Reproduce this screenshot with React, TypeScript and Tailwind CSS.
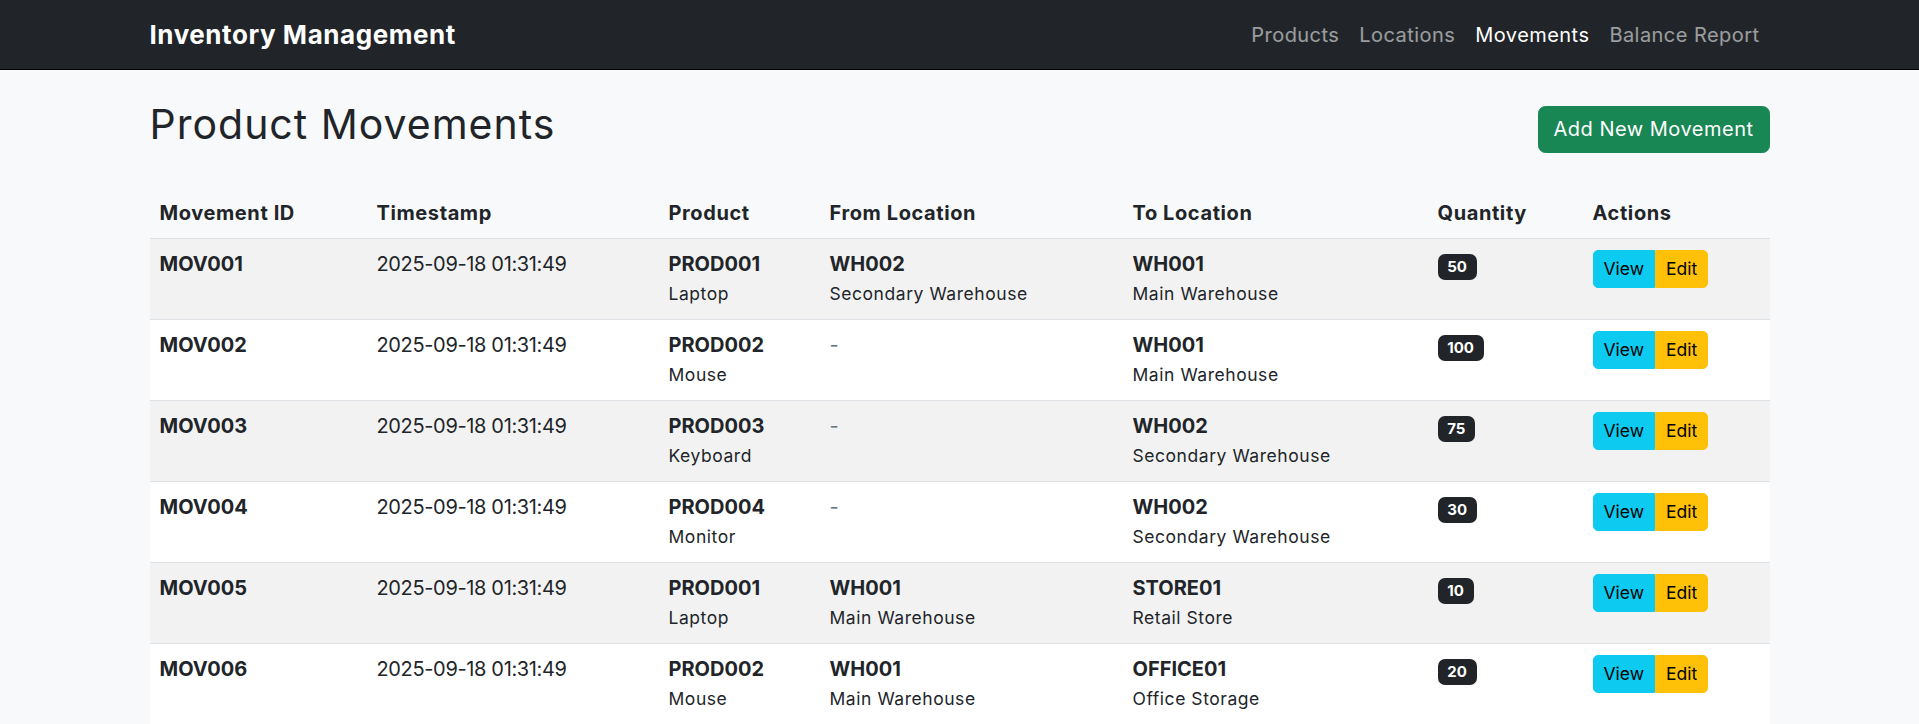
const font = { fontFamily: 'Inter, "Noto Sans", sans-serif' };

type Movement = {
  id: string;
  product: [string, string];
  from: [string, string] | null;
  to: [string, string];
  qty: number;
};

const movements: Movement[] = [
  { id: 'MOV001', product: ['PROD001', 'Laptop'], from: ['WH002', 'Secondary Warehouse'], to: ['WH001', 'Main Warehouse'], qty: 50 },
  { id: 'MOV002', product: ['PROD002', 'Mouse'], from: null, to: ['WH001', 'Main Warehouse'], qty: 100 },
  { id: 'MOV003', product: ['PROD003', 'Keyboard'], from: null, to: ['WH002', 'Secondary Warehouse'], qty: 75 },
  { id: 'MOV004', product: ['PROD004', 'Monitor'], from: null, to: ['WH002', 'Secondary Warehouse'], qty: 30 },
  { id: 'MOV005', product: ['PROD001', 'Laptop'], from: ['WH001', 'Main Warehouse'], to: ['STORE01', 'Retail Store'], qty: 10 },
  { id: 'MOV006', product: ['PROD002', 'Mouse'], from: ['WH001', 'Main Warehouse'], to: ['OFFICE01', 'Office Storage'], qty: 20 },
];

function CodeCell({ value }: { value: [string, string] | null }) {
  if (!value) {
    return <span className="text-[#6c757d]">-</span>;
  }
  return (
    <>
      <div className="font-bold">{value[0]}</div>
      <div className="text-[17.5px] leading-[30px] tracking-[0.55px] text-[#212529]">{value[1]}</div>
    </>
  );
}

export default function App() {
  const links = ['Products', 'Locations', 'Movements', 'Balance Report'];

  return (
    <div className="min-h-screen bg-[#f8f9fa] text-[#212529]" style={font}>
      {/* Navbar */}
      <nav className="h-[70px] bg-[#212529] border-b border-black">
        <div className="w-[1620px] mx-auto h-full flex items-center justify-between">
          <span className="text-white font-bold text-[26px] leading-[37.5px] tracking-[0.55px]">Inventory Management</span>
          <div className="flex">
            {links.map((l) => (
              <a
                key={l}
                className={`px-[10px] text-[20px] leading-[30px] tracking-[0.45px] ${l === 'Movements' ? 'text-white' : 'text-white/55'}`}
              >
                {l}
              </a>
            ))}
          </div>
        </div>
      </nav>

      <main className="w-[1620px] mx-auto pt-[30px]">
        {/* Heading */}
        <div className="flex justify-between items-center mb-[30px]">
          <h2 className="text-[41px] leading-[48px] font-normal tracking-[1px] mb-[10px]">Product Movements</h2>
          <button className="bg-[#198754] text-white text-[20px] leading-[30px] tracking-[0.5px] px-[15px] py-[7.5px] rounded-[7.5px] border border-[#198754]">
            Add New Movement
          </button>
        </div>

        {/* Table */}
        <table className="w-full table-fixed border-collapse text-[20px] leading-[30px]">
          <colgroup>
            <col className="w-[217px]" />
            <col className="w-[292px]" />
            <col className="w-[161px]" />
            <col className="w-[303px]" />
            <col className="w-[305px]" />
            <col className="w-[155px]" />
            <col className="w-[187px]" />
          </colgroup>
          <thead>
            <tr className="bg-[#f8f9fa] border-b border-[#dee2e6]">
              {['Movement ID', 'Timestamp', 'Product', 'From Location', 'To Location', 'Quantity', 'Actions'].map((h) => (
                <th key={h} className="text-left font-bold tracking-[0.6px] px-[10px] py-[10px]">
                  {h}
                </th>
              ))}
            </tr>
          </thead>
          <tbody>
            {movements.map((m, i) => (
              <tr key={m.id} className={`border-b border-[#dee2e6] align-top ${i % 2 === 0 ? 'bg-[#f2f2f2]' : 'bg-white'}`}>
                <td className="px-[10px] py-[10px] font-bold h-[81px]">{m.id}</td>
                <td className="px-[10px] py-[10px] whitespace-nowrap tracking-[-0.35px]">2025-09-18 01:31:49</td>
                <td className="px-[10px] py-[10px]">
                  <CodeCell value={m.product} />
                </td>
                <td className="px-[10px] py-[10px]">
                  <CodeCell value={m.from} />
                </td>
                <td className="px-[10px] py-[10px]">
                  <CodeCell value={m.to} />
                </td>
                <td className="px-[10px] py-[10px]">
                  <span className="inline-block mt-[5px] bg-[#212529] text-white font-bold text-[15px] leading-[15px] px-[9.75px] py-[5.25px] rounded-[7px]">
                    {m.qty}
                  </span>
                </td>
                <td className="px-[10px] py-[10px]">
                  <div className="inline-flex mt-[1px]">
                    <button className="bg-[#0dcaf0] border border-[#0dcaf0] text-black text-[17.5px] leading-[26.25px] px-[10px] py-[5px] rounded-l-[5px]">
                      View
                    </button>
                    <button className="bg-[#ffc107] border border-[#ffc107] text-black text-[17.5px] leading-[26.25px] px-[10px] py-[5px] rounded-r-[5px]">
                      Edit
                    </button>
                  </div>
                </td>
              </tr>
            ))}
          </tbody>
        </table>
      </main>
    </div>
  );
}
